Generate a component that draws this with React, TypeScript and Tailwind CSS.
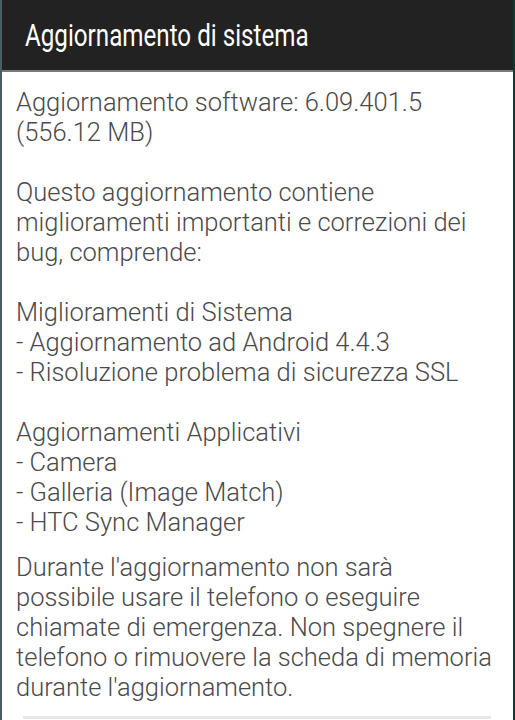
import React from "react";

const body = "font-['Roboto',sans-serif] font-light text-[25.5px] leading-[30px] text-[#4a4a4a] whitespace-nowrap";

const intro = [
  "Aggiornamento software: 6.09.401.5",
  "(556.12 MB)",
  "",
  "Questo aggiornamento contiene",
  "miglioramenti importanti e correzioni dei",
  "bug, comprende:",
  "",
  "Miglioramenti di Sistema",
  "- Aggiornamento ad Android 4.4.3",
  "- Risoluzione problema di sicurezza SSL",
  "",
  "Aggiornamenti Applicativi",
  "- Camera",
  "- Galleria (Image Match)",
  "- HTC Sync Manager",
];

const warning = [
  "Durante l'aggiornamento non sarà",
  "possibile usare il telefono o eseguire",
  "chiamate di emergenza. Non spegnere il",
  "telefono o rimuovere la scheda di memoria",
  "durante l'aggiornamento.",
];

function Lines({ lines, className }: { lines: string[]; className?: string }) {
  return (
    <div className={className}>
      {lines.map((l, i) => (
        <p key={i} className={`${body} h-[30px]`}>
          {l}
        </p>
      ))}
    </div>
  );
}

export default function App() {
  return (
    <div className="w-[515px] h-[720px] overflow-hidden bg-white flex border-l-2 border-l-[#4b5c63] border-r-2 border-r-[#0f3b2e]">
      <div className="flex-1 flex flex-col">
        <header className="h-[72px] bg-[#222222] border-b-2 border-b-[#7a7a7a] flex items-center pl-[23px] pt-[2px]">
          <h1 className="font-['Roboto',sans-serif] text-[31px] text-white scale-x-[0.78] origin-left whitespace-nowrap">
            Aggiornamento di sistema
          </h1>
        </header>
        <main className="pl-[14px] pr-3 pt-[15px]">
          <Lines lines={intro} />
          <Lines lines={warning} className="mt-[15px]" />
          <div className="mt-[14px] ml-[7px] mr-[10px] h-[3px] bg-[#e8e8e8]" />
        </main>
      </div>
    </div>
  );
}
